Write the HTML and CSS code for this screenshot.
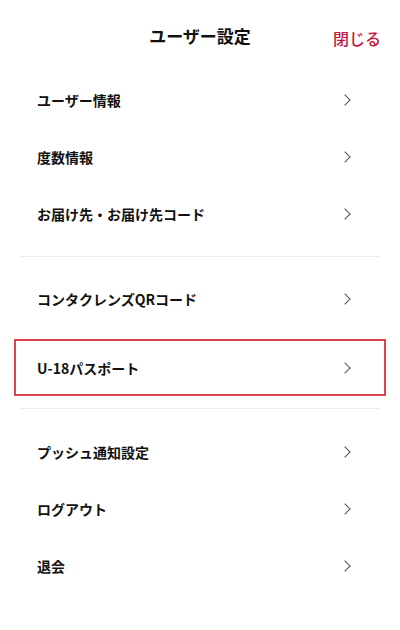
FILE: index.html
```html
<!DOCTYPE html>
<html lang="ja">
<head>
  <meta charset="UTF-8">
  <title>ユーザー設定</title>
  <link rel="stylesheet" href="styles.css">
</head>
<body>
  <div class="header">
    <h1 class="title">ユーザー設定</h1>
    <a class="close-btn" href="#">閉じる</a>
  </div>

  <div class="menu-section first">
    <a class="menu-item" href="#"><span>ユーザー情報</span><i class="chevron"></i></a>
    <a class="menu-item" href="#"><span>度数情報</span><i class="chevron"></i></a>
    <a class="menu-item" href="#"><span>お届け先・お届け先コード</span><i class="chevron"></i></a>
  </div>

  <div class="menu-section middle">
    <a class="menu-item" href="#"><span>コンタクレンズQRコード</span><i class="chevron"></i></a>
    <a class="menu-item highlight" href="#"><span>U-18パスポート</span><i class="chevron"></i></a>
  </div>

  <div class="menu-section last">
    <a class="menu-item" href="#"><span>プッシュ通知設定</span><i class="chevron"></i></a>
    <a class="menu-item" href="#"><span>ログアウト</span><i class="chevron"></i></a>
    <a class="menu-item" href="#"><span>退会</span><i class="chevron"></i></a>
  </div>
</body>
</html>
```

FILE: styles.css
```css
body {
  margin: 0;
  width: 400px;
  height: 630px;
  background-color: #fff;
  color: #111;
  font-family: "Noto Sans CJK JP", "Noto Sans", sans-serif;
  overflow: hidden;
}

a {
  color: inherit;
  text-decoration: none;
}

/* ヘッダー */
.header {
  position: relative;
  height: 71px;
  display: flex;
  justify-content: center;
  align-items: center;
  padding-bottom: 0;
  box-sizing: border-box;
}

.title {
  margin: 0;
  font-size: 17px;
  font-weight: bold;
}

.close-btn {
  position: absolute;
  right: 19px;
  top: 26px;
  font-size: 16px;
  font-weight: 500;
  color: #c4173f;
}

/* メニュー */
.menu-section {
  display: flex;
  flex-direction: column;
  margin: 0 20px;
}

.menu-section.first {
  padding-bottom: 14px;
  border-bottom: 1px solid #ececec;
}

.menu-section.middle {
  padding: 13px 0 12px;
  gap: 12px;
  border-bottom: 1px solid #ececec;
}

.menu-section.last {
  padding-top: 14px;
}

.menu-item {
  height: 57px;
  display: flex;
  align-items: center;
  justify-content: space-between;
  padding: 0 31px 0 17px;
  font-size: 14px;
  font-weight: bold;
  box-sizing: border-box;
}

.menu-item.highlight {
  margin: 0 -6px;
  padding: 0 35px 0 21px;
  border: 2px solid #d9434b;
}

.chevron {
  width: 7px;
  height: 7px;
  border-top: 1.5px solid #555;
  border-right: 1.5px solid #555;
  transform: rotate(45deg);
}
```
